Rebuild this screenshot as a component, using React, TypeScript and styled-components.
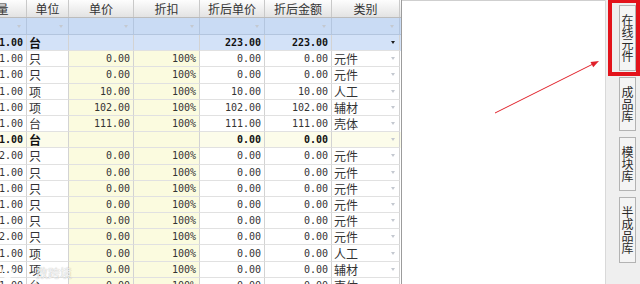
import React from "react";
import styled, { createGlobalStyle } from "styled-components";

const GlobalStyle = createGlobalStyle`
  html, body {
    margin: 0;
    padding: 0;
    background: #ffffff;
  }
  body {
    font-family: "Noto Sans CJK SC", "DejaVu Sans", sans-serif;
  }
  * {
    box-sizing: border-box;
  }
`;

const COLS = "60px 42px 65px 66px 65px 67px 68px";
const ROW_H = 16.2;

const Page = styled.div`
  position: relative;
  display: flex;
  width: 640px;
  height: 284px;
  overflow: hidden;
  background: #ffffff;
`;

const Grid = styled.div`
  flex: none;
  width: 402px;
  height: 284px;
  overflow: hidden;
  border-right: 1px solid #9c9c9c;
`;

const HeaderRow = styled.div`
  display: grid;
  grid-template-columns: ${COLS};
  height: 18px;
  margin-left: -33px;
  background: linear-gradient(#fdfdfd, #e3e3e3);
  border-bottom: 1px solid #bcbcbc;
`;

const HeaderCell = styled.div`
  border-right: 1px solid #c9c9c9;
  font-size: 12px;
  line-height: 17px;
  color: #333333;
  text-align: center;
  white-space: nowrap;
`;

const FilterRow = styled.div`
  display: grid;
  grid-template-columns: ${COLS};
  height: 17px;
  margin-left: -33px;
  background: #c9dbf4;
  border-bottom: 1px solid #b3c5de;
`;

const FilterCell = styled.div`
  display: flex;
  align-items: center;
  justify-content: flex-end;
  padding-right: 5px;
  border-right: 1px solid #b4c6df;
`;

const Caret = styled.span<{ $dark?: boolean }>`
  width: 0;
  height: 0;
  border-left: 2.5px solid transparent;
  border-right: 2.5px solid transparent;
  border-top: ${({ $dark }) => ($dark ? "3px solid #1e1e1e" : "3px solid #c4c9d0")};
`;

const DataRow = styled.div<{ $kind: "item" | "group" | "sum" }>`
  display: grid;
  grid-template-columns: ${COLS};
  height: ${ROW_H}px;
  margin-left: -33px;
  background: ${({ $kind }) =>
    $kind === "group" ? "#d3e2f8" : $kind === "sum" ? "#fcfcea" : "#ffffff"};
`;

const Cell = styled.div<{ $tint?: boolean; $bold?: boolean }>`
  display: flex;
  align-items: center;
  min-width: 0;
  overflow: hidden;
  white-space: nowrap;
  border-right: 1px solid #d3d3d3;
  border-bottom: 1px solid #e1e1e1;
  background: ${({ $tint }) => ($tint ? "#fbfbdf" : "transparent")};
  color: ${({ $bold }) => ($bold ? "#111111" : "#333333")};
  font-weight: ${({ $bold }) => ($bold ? 700 : 400)};
`;

const NumCell = styled(Cell)`
  justify-content: flex-end;
  padding-right: 3px;
  font-family: "DejaVu Sans Mono", "Liberation Mono", monospace;
  font-size: 10px;
`;

const TextCell = styled(Cell)`
  padding-left: 2px;
  font-size: 12px;
`;

const CatCell = styled(Cell)`
  justify-content: space-between;
  padding: 0 4px 0 2px;
  font-size: 12px;
`;

const Blank = styled.div`
  flex: 1;
  height: 284px;
  border-top: 1px solid #cfcfcf;
`;

const Side = styled.div`
  flex: none;
  width: 35px;
  height: 284px;
  display: flex;
  flex-direction: column;
  align-items: flex-end;
  gap: 6px;
  padding: 5px 4px 0 0;
  background: #efefef;
  border-left: 1px solid #d9d9d9;
`;

const Tab = styled.div`
  width: 17px;
  padding: 8px 0;
  writing-mode: vertical-rl;
  text-orientation: upright;
  display: flex;
  align-items: center;
  justify-content: center;
  font-size: 12px;
  line-height: 15px;
  color: #2b2b2b;
  background: #f4f4f4;
  border: 1px solid #b3b3b3;
`;

const Highlight = styled.div`
  position: absolute;
  left: 608px;
  top: -1px;
  width: 32px;
  height: 77px;
  border: 4px solid #e3131b;
  pointer-events: none;
`;

const Overlay = styled.svg`
  position: absolute;
  left: 0;
  top: 0;
  pointer-events: none;
`;

const Watermark = styled.div`
  position: absolute;
  left: 1px;
  top: 264px;
  display: flex;
  align-items: center;
  gap: 22px;
  font-size: 12px;
  color: rgba(255, 255, 255, 0.85);
  text-shadow: 0 0 1px rgba(0, 0, 0, 0.35);
  pointer-events: none;
`;

type Item = {
  qty: string;
  unit: string;
  price: string;
  disc: string;
  dprice: string;
  amount: string;
  cat: string;
  kind?: "item" | "group" | "sum";
};

const item = (qty: string, unit: string, price: string, cat: string): Item => ({
  qty,
  unit,
  price,
  disc: "100%",
  dprice: price,
  amount: price,
  cat,
});

const rows: Item[] = [
  { qty: "1.00", unit: "台", price: "", disc: "", dprice: "223.00", amount: "223.00", cat: "", kind: "group" },
  item("1.00", "只", "0.00", "元件"),
  item("1.00", "只", "0.00", "元件"),
  item("1.00", "项", "10.00", "人工"),
  item("1.00", "项", "102.00", "辅材"),
  item("1.00", "台", "111.00", "壳体"),
  { qty: "1.00", unit: "台", price: "", disc: "", dprice: "0.00", amount: "0.00", cat: "", kind: "sum" },
  item("2.00", "只", "0.00", "元件"),
  item("1.00", "只", "0.00", "元件"),
  item("1.00", "只", "0.00", "元件"),
  item("1.00", "只", "0.00", "元件"),
  item("1.00", "只", "0.00", "元件"),
  item("2.00", "只", "0.00", "元件"),
  item("1.00", "项", "0.00", "人工"),
  item("1.00", "项", "0.00", "辅材"),
  item("1.00", "台", "0.00", "壳体"),
];

const headers = ["数量", "单位", "单价", "折扣", "折后单价", "折后金额", "类别"];
const tabs = ["在线元件", "成品库", "模块库", "半成品库"];

export default function App() {
  return (
    <Page>
      <GlobalStyle />
      <Grid>
        <HeaderRow>
          {headers.map((h) => (
            <HeaderCell key={h}>{h}</HeaderCell>
          ))}
        </HeaderRow>
        <FilterRow>
          {headers.map((h) => (
            <FilterCell key={h}>
              <Caret />
            </FilterCell>
          ))}
        </FilterRow>
        {rows.map((r, i) => {
          const kind = r.kind ?? "item";
          const bold = kind !== "item";
          const tint = kind !== "group";
          return (
            <DataRow key={i} $kind={kind}>
              <NumCell $bold={bold}>{r.qty}</NumCell>
              <TextCell $bold={bold}>{r.unit}</TextCell>
              <NumCell $tint={tint}>{r.price}</NumCell>
              <NumCell $tint={tint}>{r.disc}</NumCell>
              <NumCell $bold={bold}>{r.dprice}</NumCell>
              <NumCell $bold={bold}>{r.amount}</NumCell>
              <CatCell>
                <span>{r.cat}</span>
                <Caret $dark={kind === "group"} />
              </CatCell>
            </DataRow>
          );
        })}
      </Grid>
      <Blank />
      <Side>
        {tabs.map((t) => (
          <Tab key={t}>{t}</Tab>
        ))}
      </Side>
      <Highlight />
      <Overlay width={640} height={284} viewBox="0 0 640 284">
        <line x1={495} y1={113} x2={593} y2={64} stroke="#e0202a" strokeWidth={1} />
        <polygon points="599,61 593.2,67.3 590.5,61.9" fill="#e0202a" />
      </Overlay>
      <Watermark>
        <svg width={13} height={13} viewBox="0 0 13 13">
          <circle cx={6.5} cy={6.5} r={5.3} fill="none" stroke="rgba(255,255,255,0.85)" strokeWidth={1.6} />
        </svg>
        <span>数跨境</span>
      </Watermark>
    </Page>
  );
}
